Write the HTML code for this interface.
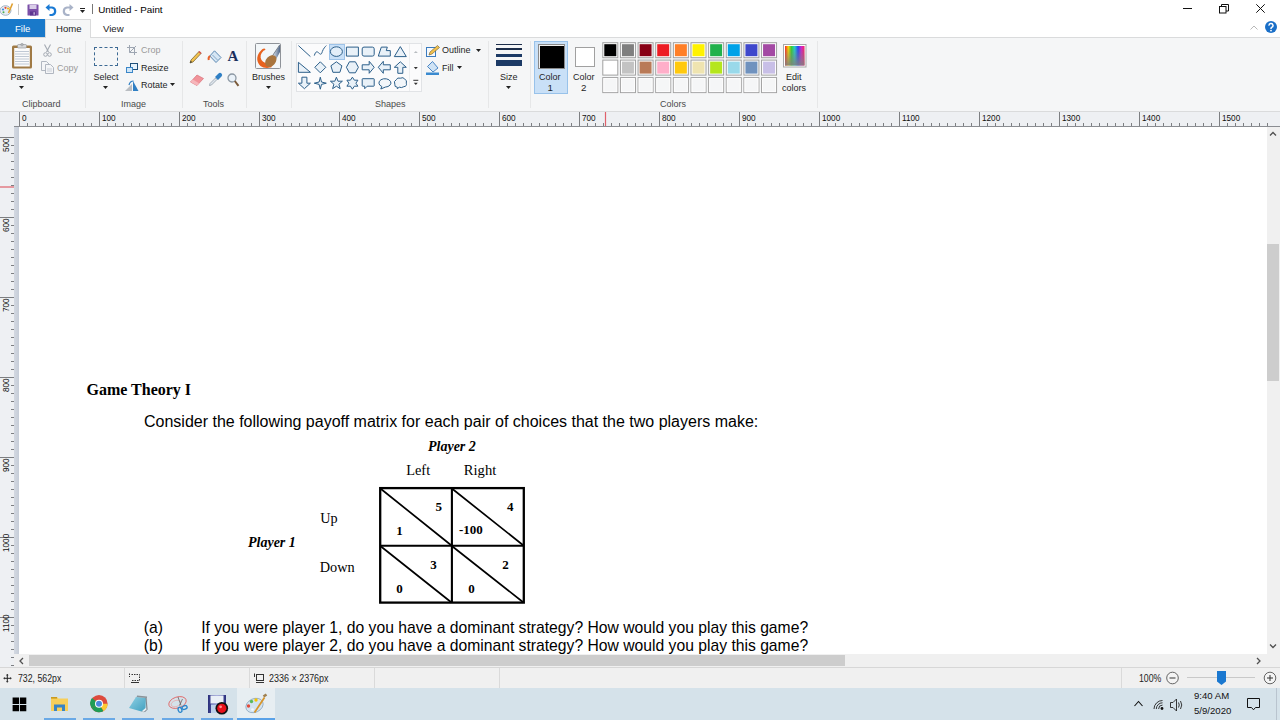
<!DOCTYPE html>
<html><head><meta charset="utf-8"><style>
*{box-sizing:border-box}
html,body{margin:0;padding:0}
body{width:1280px;height:720px;overflow:hidden;position:relative;background:#fff;font-family:"Liberation Sans",sans-serif;color:#000}
.a{position:absolute}
.t{position:absolute;white-space:nowrap;line-height:1}
.rb{font-size:9px;color:#1e1e1e}
.gl{font-size:9px;color:#4a4a4a}
.sep{position:absolute;width:1px;background:#e6e7e8}
svg{position:absolute;overflow:visible}
</style></head><body>

<!-- ===== TITLE BAR ===== -->
<div id="title" class="a" style="left:0;top:0;width:1280px;height:19px;background:#fff"></div>
<div class="t" style="left:98.3px;top:4.6px;font-size:9.8px;color:#000">Untitled - Paint</div>
<!-- paint icon -->
<svg style="left:0;top:3px" width="13" height="13" viewBox="0 0 13 13">
<ellipse cx="5.5" cy="7.5" rx="5.5" ry="4.8" fill="#e9edf2" stroke="#8ea3ba" stroke-width="0.8"/>
<circle cx="3" cy="6.5" r="1.1" fill="#3a8de0"/><circle cx="5.5" cy="4.8" r="1.1" fill="#e04a3a"/><circle cx="3.5" cy="9.3" r="1" fill="#4caf50"/><circle cx="8" cy="5.6" r="1" fill="#f5b400"/>
<path d="M12.5 0.5 L8.5 10" stroke="#e0a030" stroke-width="1.6"/>
</svg>
<div class="a" style="left:18px;top:4px;width:1px;height:11px;background:#c8c8c8"></div>
<!-- save -->
<svg style="left:27px;top:4px" width="12" height="12" viewBox="0 0 12 12">
<rect x="0.5" y="0.5" width="11" height="11" rx="0.5" fill="#7b4fa8"/>
<rect x="2.5" y="1" width="7" height="4" fill="#d9cde8"/>
<rect x="3" y="7.5" width="6" height="4" fill="#5d3590"/>
<rect x="6.5" y="8.2" width="1.3" height="2.5" fill="#cdbde0"/>
</svg>
<!-- undo -->
<svg style="left:45px;top:4px" width="12" height="12" viewBox="0 0 12 12">
<path d="M3.5 3.5 H7 A3.8 3.8 0 0 1 7 11 H4.5" fill="none" stroke="#1a7ad4" stroke-width="2.2"/>
<path d="M0.5 3.5 L4.5 0 V7 Z" fill="#1a7ad4"/>
</svg>
<!-- redo -->
<svg style="left:62px;top:4px" width="12" height="12" viewBox="0 0 12 12">
<path d="M8.5 3.5 H5 A3.8 3.8 0 0 0 5 11 H7.5" fill="none" stroke="#a9b3c8" stroke-width="2.2"/>
<path d="M11.5 3.5 L7.5 0 V7 Z" fill="#a9b3c8"/>
</svg>
<!-- customize -->
<div class="a" style="left:80px;top:8px;width:5px;height:1px;background:#222"></div>
<svg style="left:80px;top:10px" width="6" height="4" viewBox="0 0 6 4"><path d="M0 0 H5 L2.5 3 Z" fill="#222"/></svg>
<div class="a" style="left:92px;top:4px;width:1px;height:10px;background:#777"></div>
<!-- window controls -->
<div class="a" style="left:1183px;top:8px;width:9px;height:1px;background:#111"></div>
<svg style="left:1219px;top:4px" width="10" height="10" viewBox="0 0 10 10">
<rect x="0.5" y="2.5" width="6.5" height="6.5" fill="none" stroke="#111" stroke-width="1"/>
<path d="M2.5 2.5 V0.5 H9.5 V7 H7" fill="none" stroke="#111" stroke-width="1"/>
</svg>
<svg style="left:1256px;top:4px" width="9" height="9" viewBox="0 0 9 9">
<path d="M0.3 0.3 L8.7 8.7 M8.7 0.3 L0.3 8.7" stroke="#111" stroke-width="1"/>
</svg>


<!-- ===== TABS ===== -->
<div class="a" style="left:0;top:37px;width:1280px;height:1px;background:#dadbdc"></div>
<div class="a" style="left:0;top:19px;width:45px;height:18px;background:#1979ca"></div>
<div class="t" style="left:15px;top:24px;font-size:9.6px;color:#fff">File</div>
<div class="a" style="left:45px;top:19px;width:46px;height:19px;background:#f5f6f7;border:1px solid #dadbdc;border-bottom:none"></div>
<div class="t" style="left:56px;top:24px;font-size:9.6px;color:#222">Home</div>
<div class="t" style="left:103px;top:24px;font-size:9.6px;color:#222">View</div>
<svg style="left:1250px;top:25px" width="8" height="5" viewBox="0 0 8 5"><path d="M0.5 4.5 L4 1 L7.5 4.5" fill="none" stroke="#b8b8b8" stroke-width="1"/></svg>
<svg style="left:1265px;top:21px" width="12" height="12" viewBox="0 0 12 12"><circle cx="6" cy="6" r="6" fill="#1a6fc8"/>
<path d="M4 4.6 A2 2 0 1 1 6.6 6.4 C6 6.7 6 7 6 7.9" fill="none" stroke="#fff" stroke-width="1.5"/><circle cx="6" cy="9.6" r="0.9" fill="#fff"/></svg>


<!-- ===== RIBBON ===== -->
<div id="ribbon" class="a" style="left:0;top:38px;width:1280px;height:73px;background:#f5f6f7"></div>
<div class="a" style="left:0;top:111px;width:1280px;height:1px;background:#dadbdc"></div>
<!--RIBBON-->
<div class="sep" style="left:85px;top:41px;height:67px"></div>
<div class="sep" style="left:182px;top:41px;height:67px"></div>
<div class="sep" style="left:246px;top:41px;height:67px"></div>
<div class="sep" style="left:291px;top:41px;height:67px"></div>
<div class="sep" style="left:488px;top:41px;height:67px"></div>
<div class="sep" style="left:530px;top:41px;height:67px"></div>
<div class="sep" style="left:817px;top:41px;height:67px"></div>
<svg style="left:11px;top:43px" width="22" height="26" viewBox="0 0 22 26">
<rect x="1" y="2.5" width="20" height="23" rx="1.5" fill="#a07a45"/>
<rect x="3.2" y="5" width="15.6" height="18.5" fill="#fbfbfb"/>
<path d="M4 8.5H18M4 11H18M4 13.5H18M4 16H18M4 18.5H18M4 21H18" stroke="#b9c3cf" stroke-width="0.9"/>
<rect x="6.5" y="1.5" width="9" height="3.5" rx="1" fill="#d7d9dc" stroke="#8b8f94" stroke-width="0.6"/>
<circle cx="11" cy="1.6" r="1.3" fill="none" stroke="#8b8f94" stroke-width="0.6"/>
</svg>
<div class="t rb" style="left:10.5px;top:73px">Paste</div>
<svg style="left:19.0px;top:85.5px" width="5" height="3" viewBox="0 0 5 3"><path d="M0 0 H5 L2.5 3 Z" fill="#222"/></svg>

<svg style="left:43px;top:44px" width="9" height="13" viewBox="0 0 9 13">
<path d="M1.5 0.5 L5.5 8 M7.5 0.5 L3.5 8" stroke="#a3a9b2" stroke-width="1.1"/>
<circle cx="2.5" cy="10.5" r="1.8" fill="none" stroke="#a3a9b2" stroke-width="1"/><circle cx="6.5" cy="10.5" r="1.8" fill="none" stroke="#a3a9b2" stroke-width="1"/>
</svg>
<div class="t rb" style="left:57px;top:46px;color:#9a9a9a">Cut</div>
<svg style="left:41px;top:61px" width="13" height="13" viewBox="0 0 13 13">
<path d="M0.5 0.5 H5.5 L8 3 V9.5 H0.5 Z" fill="#f4f5f7" stroke="#a9b0ba" stroke-width="0.9"/>
<path d="M4.5 3.5 H9.5 L12.5 6.5 V12.5 H4.5 Z" fill="#f4f5f7" stroke="#a9b0ba" stroke-width="0.9"/>
<path d="M6 8H11M6 10H11" stroke="#b8c0ca" stroke-width="0.7"/>
</svg>
<div class="t rb" style="left:57px;top:63.5px;color:#9a9a9a">Copy</div>
<div class="t gl" style="left:22px;top:100px">Clipboard</div>
<div class="a" style="left:94px;top:47px;width:24px;height:19px;border:1px dashed #3d6a94"></div>
<div class="t rb" style="left:93.5px;top:73px">Select</div>
<svg style="left:103.0px;top:85.5px" width="5" height="3" viewBox="0 0 5 3"><path d="M0 0 H5 L2.5 3 Z" fill="#222"/></svg>

<svg style="left:127px;top:45px" width="10" height="10" viewBox="0 0 10 10">
<path d="M2.5 0 V7.5 H10 M0 2.5 H7.5 V10" fill="none" stroke="#9ea6b2" stroke-width="1"/><path d="M2.5 7.5 L9 1" stroke="#9ea6b2" stroke-width="1"/>
</svg>
<div class="t rb" style="left:141px;top:46px;color:#9a9a9a">Crop</div>
<svg style="left:126px;top:63px" width="12" height="10" viewBox="0 0 12 10">
<rect x="4.5" y="0.5" width="7" height="6" fill="#e6f2fb" stroke="#1f4f7a" stroke-width="1"/>
<rect x="0.5" y="4.5" width="6" height="5" fill="#d0e6f7" stroke="#3a86c8" stroke-width="1"/>
</svg>
<div class="t rb" style="left:141px;top:64px">Resize</div>
<svg style="left:125px;top:80px" width="14" height="11" viewBox="0 0 14 11">
<path d="M0 11 L7 4 V11 Z" fill="#b9bdc2"/><path d="M8 11 V1 L13.5 11 Z" fill="#2f7fc4"/>
<path d="M4 5 Q5 1 8.5 1" fill="none" stroke="#2f7fc4" stroke-width="1.2"/>
</svg>
<div class="t rb" style="left:141px;top:81px">Rotate</div>
<svg style="left:170.0px;top:82.5px" width="5" height="3" viewBox="0 0 5 3"><path d="M0 0 H5 L2.5 3 Z" fill="#222"/></svg>

<div class="t gl" style="left:121px;top:100px">Image</div>
<svg style="left:189px;top:50px" width="13" height="14" viewBox="0 0 13 14">
<path d="M1 13 L2 10 L10 1.5 L12 3.5 L4 12 Z" fill="#f2c14e" stroke="#6b5a2a" stroke-width="0.7"/>
<path d="M10 1.5 L12 3.5" stroke="#d9534f" stroke-width="1.6"/>
<path d="M1 13 L1.8 10.8 L3 12 Z" fill="#333"/>
</svg>
<svg style="left:208px;top:50px" width="14" height="14" viewBox="0 0 14 14">
<path d="M6.5 0.8 L13 7.5 L8 12.5 L1.8 6 Z" fill="#d6e6f4" stroke="#4d7eaa" stroke-width="0.9"/>
<path d="M2 6 Q0 7.5 0.8 10" fill="none" stroke="#e8622c" stroke-width="2"/>
<path d="M4.5 5 L9.5 10" stroke="#4d7eaa" stroke-width="0.6"/>
</svg>
<div class="t" style="left:227.5px;top:49px;font-family:Liberation Serif,serif;font-weight:bold;font-size:15px;color:#1b2f5e">A</div>
<svg style="left:190px;top:74px" width="14" height="12" viewBox="0 0 14 12">
<path d="M0.5 8 L7 1 L13.5 4.5 L7 11.5 Z" fill="#f1939a" stroke="#d8737b" stroke-width="0.7"/>
<path d="M0.5 8 L7 11.5 L9 9.3 L2.8 5.6 Z" fill="#f6b6bb"/>
</svg>
<svg style="left:209px;top:73px" width="13" height="13" viewBox="0 0 13 13">
<path d="M0.5 12.5 L1 10.5 L6.5 5 L8 6.5 L2.5 12 Z" fill="#dfe5ec" stroke="#8a96a3" stroke-width="0.7"/>
<path d="M6 4 L9 7 L10.5 5.5 L12.5 3.5 A1.8 1.8 0 0 0 9.5 0.5 L7.5 2.5 Z" fill="#2f7fc4"/>
</svg>
<svg style="left:227px;top:73px" width="12" height="14" viewBox="0 0 12 14">
<circle cx="5" cy="5" r="4" fill="#eaf2f9" stroke="#8c98a4" stroke-width="1.3"/>
<path d="M7.8 8 L11.5 12.8" stroke="#7a5a3a" stroke-width="2"/>
</svg>
<div class="t gl" style="left:203px;top:100px">Tools</div>
<svg style="left:255px;top:43px" width="26" height="26" viewBox="0 0 26 26">
<defs><linearGradient id="hdl" x1="0" y1="0" x2="1" y2="0"><stop offset="0" stop-color="#e8eef4"/><stop offset="1" stop-color="#4f6688"/></linearGradient></defs>
<rect x="0.5" y="0.5" width="25" height="25" rx="1" fill="#f3f7f9" stroke="#8f9399" stroke-width="1"/>
<path d="M10.5 6.2 C9.5 4.8 7.5 5.5 6 7.5 C3 10.5 1.8 14 2.3 17 C3 22 7 25 12 25 L16.5 24.2 L17.2 19.5 C13.5 21.5 9 20.5 6.5 17 C4.8 14.2 5.5 10.5 8.5 7.8 C9.3 7.2 10.2 7 10.5 6.2 Z" fill="#e8621e"/>
<path d="M17.5 13.5 L25 2 V9 L21 16.5 Z" fill="url(#hdl)"/>
<path d="M16.8 13.8 L24.8 1.8" stroke="#3d4a5c" stroke-width="0.7"/>
<ellipse cx="15.8" cy="18" rx="4.8" ry="6.6" transform="rotate(42 15.8 18)" fill="#a9753e"/>
</svg>
<div class="t rb" style="left:252px;top:73px">Brushes</div>
<svg style="left:265.5px;top:85.5px" width="5" height="3" viewBox="0 0 5 3"><path d="M0 0 H5 L2.5 3 Z" fill="#222"/></svg>

<div class="a" style="left:296px;top:43px;width:126px;height:49px;background:#fbfbfc;border:1px solid #e1e3e6"></div>
<div class="a" style="left:409px;top:44px;width:1px;height:47px;background:#eceef0"></div>
<div class="a" style="left:329px;top:43.5px;width:16px;height:16px;background:#c9e0f7;border:1px solid #9ec3e8"></div>
<svg style="left:0;top:0" width="1" height="1"><path transform="translate(304.4 51.6)" d="M-6 -6 L6 5" fill="none" stroke="#2c5f8a" stroke-width="1"/><path transform="translate(320.3 51.6)" d="M-6 4 C-3 -6 0 8 2 0 C3 -3 5 -5 6 -6" fill="none" stroke="#2c5f8a" stroke-width="1"/><ellipse cx="336.4" cy="51.6" rx="6" ry="4.8" fill="#e3eef8" stroke="#2c5f8a" stroke-width="1"/><path transform="translate(352.4 51.6)" d="M-6 -4.5 H6 V4.5 H-6 Z" fill="#e9f1f8" stroke="#2c5f8a" stroke-width="1"/><rect x="362.2" y="47.1" width="12" height="9" rx="1.8" fill="#e9f1f8" stroke="#2c5f8a" stroke-width="1"/><path transform="translate(384.3 51.6)" d="M-6 4.5 L-3 -4.5 H3 L2 -1 H6 V4.5 Z" fill="#e9f1f8" stroke="#2c5f8a" stroke-width="1"/><path transform="translate(400.3 51.6)" d="M0 -5 L6 5 H-6 Z" fill="#e9f1f8" stroke="#2c5f8a" stroke-width="1"/><path transform="translate(304.4 67.3)" d="M-6 -5 V5 H6 Z" fill="#e9f1f8" stroke="#2c5f8a" stroke-width="1"/><path transform="translate(320.3 67.3)" d="M0 -5.5 L5.5 0 L0 5.5 L-5.5 0 Z" fill="#e9f1f8" stroke="#2c5f8a" stroke-width="1"/><path transform="translate(336.4 67.3)" d="M0 -5.5 L5.5 -1.5 L3.5 5 H-3.5 L-5.5 -1.5 Z" fill="#e9f1f8" stroke="#2c5f8a" stroke-width="1"/><path transform="translate(352.4 67.3)" d="M-3 -5.5 H3 L6 0 L3 5.5 H-3 L-6 0 Z" fill="#e9f1f8" stroke="#2c5f8a" stroke-width="1"/><path transform="translate(368.2 67.3)" d="M-6 -2.5 H1 V-6 L6 0 L1 6 V2.5 H-6 Z" fill="#e9f1f8" stroke="#2c5f8a" stroke-width="1"/><path transform="translate(384.3 67.3)" d="M6 -2.5 H-1 V-6 L-6 0 L-1 6 V2.5 H6 Z" fill="#e9f1f8" stroke="#2c5f8a" stroke-width="1"/><path transform="translate(400.3 67.3)" d="M-2.5 6 V0 H-6 L0 -5.5 L6 0 H2.5 V6 Z" fill="#e9f1f8" stroke="#2c5f8a" stroke-width="1"/><path transform="translate(304.4 83.2)" d="M-2.5 -6 V0 H-6 L0 5.5 L6 0 H2.5 V-6 Z" fill="#e9f1f8" stroke="#2c5f8a" stroke-width="1"/><path transform="translate(320.3 83.2)" d="M0 -6 L1.2 -1.2 L6 0 L1.2 1.2 L0 6 L-1.2 1.2 L-6 0 L-1.2 -1.2 Z" fill="#e9f1f8" stroke="#2c5f8a" stroke-width="1"/><path transform="translate(336.4 83.2)" d="M0 -6 L1.6 -2 L6 -2 L2.5 1 L3.8 5.5 L0 3 L-3.8 5.5 L-2.5 1 L-6 -2 L-1.6 -2 Z" fill="#e9f1f8" stroke="#2c5f8a" stroke-width="1"/><path transform="translate(352.4 83.2)" d="M0 -6 L2 -3 H5.5 L3.5 0 L5.5 3 H2 L0 6 L-2 3 H-5.5 L-3.5 0 L-5.5 -3 H-2 Z" fill="#e9f1f8" stroke="#2c5f8a" stroke-width="1"/><path transform="translate(368.2 83.2)" d="M-5.5 -4.5 H5.5 Q6 -4.5 6 -4 V2.5 Q6 3 5.5 3 H-1 L-3.5 5.5 V3 H-5.5 Q-6 3 -6 2.5 V-4 Q-6 -4.5 -5.5 -4.5 Z" fill="#e9f1f8" stroke="#2c5f8a" stroke-width="1"/><path transform="translate(384.3 83.2)" d="M-2.5 3.3 A6 4.2 0 1 1 1 3.9 L-3.5 5.8 Z" fill="#f2f6fa" stroke="#2c5f8a" stroke-width="1"/><path transform="translate(400.3 83.2)" d="M-3 4 Q-6 4 -5.5 1 Q-7 -2 -4 -3.5 Q-3 -6 0 -5 Q3 -6.5 4.5 -4 Q7 -3 6 0 Q7 3 3.5 3.5 Q1 5 -1 4 L-3 5.5 Z" fill="#f2f6fa" stroke="#2c5f8a" stroke-width="1"/><path d="M413.8 53 H417.8 L415.8 51 Z" fill="#b8bcc0"/><path d="M413.8 67 H417.8 L415.8 69.2 Z" fill="#333"/><path d="M413.3 80.3 H418.3" stroke="#333" stroke-width="1"/><path d="M413.8 82.8 H417.8 L415.8 85 Z" fill="#333"/></svg>
<div class="t gl" style="left:375px;top:100px">Shapes</div>
<svg style="left:426px;top:45px" width="14" height="12" viewBox="0 0 14 12">
<rect x="0.5" y="2.5" width="9" height="9" fill="#f7f9fb" stroke="#3a7bbf" stroke-width="1"/>
<path d="M3 10 L4 7 L11.5 0.5 L13.5 2.5 L6 9 Z" fill="#f2c14e" stroke="#6b5a2a" stroke-width="0.6"/>
</svg>
<div class="t rb" style="left:442px;top:46px">Outline</div>
<svg style="left:476.0px;top:48.5px" width="5" height="3" viewBox="0 0 5 3"><path d="M0 0 H5 L2.5 3 Z" fill="#222"/></svg>

<svg style="left:426px;top:61px" width="14" height="14" viewBox="0 0 14 14">
<path d="M6.5 0.5 L12 7 L7 11 L1.5 5.5 Z" fill="#cfe3f5" stroke="#3a7bbf" stroke-width="0.9"/>
<rect x="0" y="11.5" width="13" height="2.5" fill="#3a8ad0"/>
</svg>
<div class="t rb" style="left:442px;top:64px">Fill</div>
<svg style="left:457.0px;top:65.5px" width="5" height="3" viewBox="0 0 5 3"><path d="M0 0 H5 L2.5 3 Z" fill="#222"/></svg>

<div class="a" style="left:496px;top:44px;width:26px;height:1px;background:#1c2d4a"></div>
<div class="a" style="left:496px;top:48px;width:26px;height:2px;background:#1c2d4a"></div>
<div class="a" style="left:496px;top:54px;width:26px;height:3px;background:#1c3a66"></div>
<div class="a" style="left:496px;top:60px;width:26px;height:6px;background:#1c3a66"></div>
<div class="t rb" style="left:500px;top:73px">Size</div>
<svg style="left:506.0px;top:85.5px" width="5" height="3" viewBox="0 0 5 3"><path d="M0 0 H5 L2.5 3 Z" fill="#222"/></svg>

<div class="a" style="left:534px;top:41px;width:34px;height:53px;background:#c9e0f7;border:1px solid #98c2ea"></div>
<div class="a" style="left:538px;top:44px;width:27px;height:25px;background:#000;border:1px solid #8a8a8a;box-shadow:inset 0 0 0 1px #f0f0f0"></div>
<div class="a" style="left:539.5px;top:45.5px;width:24px;height:22px;background:#000"></div>
<div class="t rb" style="left:539px;top:73px">Color</div>
<div class="t rb" style="left:547.5px;top:83.3px;font-size:9.8px">1</div>
<div class="a" style="left:575px;top:47px;width:20px;height:20px;background:#fff;border:1px solid #a0a0a0"></div>
<div class="t rb" style="left:573px;top:73px">Color</div>
<div class="t rb" style="left:581px;top:83.3px;font-size:9.8px">2</div>
<svg style="left:0;top:0" width="1" height="1"><rect x="602.80" y="42.70" width="15" height="15" fill="#fff" stroke="#a0a0a0" stroke-width="1"/><rect x="604.30" y="44.20" width="12" height="12" fill="#000000"/><rect x="620.44" y="42.70" width="15" height="15" fill="#fff" stroke="#a0a0a0" stroke-width="1"/><rect x="621.94" y="44.20" width="12" height="12" fill="#7f7f7f"/><rect x="638.08" y="42.70" width="15" height="15" fill="#fff" stroke="#a0a0a0" stroke-width="1"/><rect x="639.58" y="44.20" width="12" height="12" fill="#880015"/><rect x="655.72" y="42.70" width="15" height="15" fill="#fff" stroke="#a0a0a0" stroke-width="1"/><rect x="657.22" y="44.20" width="12" height="12" fill="#ed1c24"/><rect x="673.36" y="42.70" width="15" height="15" fill="#fff" stroke="#a0a0a0" stroke-width="1"/><rect x="674.86" y="44.20" width="12" height="12" fill="#ff7f27"/><rect x="691.00" y="42.70" width="15" height="15" fill="#fff" stroke="#a0a0a0" stroke-width="1"/><rect x="692.50" y="44.20" width="12" height="12" fill="#fff200"/><rect x="708.64" y="42.70" width="15" height="15" fill="#fff" stroke="#a0a0a0" stroke-width="1"/><rect x="710.14" y="44.20" width="12" height="12" fill="#22b14c"/><rect x="726.28" y="42.70" width="15" height="15" fill="#fff" stroke="#a0a0a0" stroke-width="1"/><rect x="727.78" y="44.20" width="12" height="12" fill="#00a2e8"/><rect x="743.92" y="42.70" width="15" height="15" fill="#fff" stroke="#a0a0a0" stroke-width="1"/><rect x="745.42" y="44.20" width="12" height="12" fill="#3f48cc"/><rect x="761.56" y="42.70" width="15" height="15" fill="#fff" stroke="#a0a0a0" stroke-width="1"/><rect x="763.06" y="44.20" width="12" height="12" fill="#a349a4"/><rect x="602.80" y="60.10" width="15" height="15" fill="#fff" stroke="#a0a0a0" stroke-width="1"/><rect x="604.30" y="61.60" width="12" height="12" fill="#ffffff"/><rect x="620.44" y="60.10" width="15" height="15" fill="#fff" stroke="#a0a0a0" stroke-width="1"/><rect x="621.94" y="61.60" width="12" height="12" fill="#c3c3c3"/><rect x="638.08" y="60.10" width="15" height="15" fill="#fff" stroke="#a0a0a0" stroke-width="1"/><rect x="639.58" y="61.60" width="12" height="12" fill="#b97a57"/><rect x="655.72" y="60.10" width="15" height="15" fill="#fff" stroke="#a0a0a0" stroke-width="1"/><rect x="657.22" y="61.60" width="12" height="12" fill="#ffaec9"/><rect x="673.36" y="60.10" width="15" height="15" fill="#fff" stroke="#a0a0a0" stroke-width="1"/><rect x="674.86" y="61.60" width="12" height="12" fill="#ffc90e"/><rect x="691.00" y="60.10" width="15" height="15" fill="#fff" stroke="#a0a0a0" stroke-width="1"/><rect x="692.50" y="61.60" width="12" height="12" fill="#efe4b0"/><rect x="708.64" y="60.10" width="15" height="15" fill="#fff" stroke="#a0a0a0" stroke-width="1"/><rect x="710.14" y="61.60" width="12" height="12" fill="#b5e61d"/><rect x="726.28" y="60.10" width="15" height="15" fill="#fff" stroke="#a0a0a0" stroke-width="1"/><rect x="727.78" y="61.60" width="12" height="12" fill="#99d9ea"/><rect x="743.92" y="60.10" width="15" height="15" fill="#fff" stroke="#a0a0a0" stroke-width="1"/><rect x="745.42" y="61.60" width="12" height="12" fill="#7092be"/><rect x="761.56" y="60.10" width="15" height="15" fill="#fff" stroke="#a0a0a0" stroke-width="1"/><rect x="763.06" y="61.60" width="12" height="12" fill="#c8bfe7"/><rect x="602.80" y="77.60" width="15" height="15" fill="#f5f6f7" stroke="#a0a0a0" stroke-width="1"/><rect x="603.80" y="78.60" width="13" height="13" fill="none" stroke="#fdfdfd" stroke-width="1"/><rect x="620.44" y="77.60" width="15" height="15" fill="#f5f6f7" stroke="#a0a0a0" stroke-width="1"/><rect x="621.44" y="78.60" width="13" height="13" fill="none" stroke="#fdfdfd" stroke-width="1"/><rect x="638.08" y="77.60" width="15" height="15" fill="#f5f6f7" stroke="#a0a0a0" stroke-width="1"/><rect x="639.08" y="78.60" width="13" height="13" fill="none" stroke="#fdfdfd" stroke-width="1"/><rect x="655.72" y="77.60" width="15" height="15" fill="#f5f6f7" stroke="#a0a0a0" stroke-width="1"/><rect x="656.72" y="78.60" width="13" height="13" fill="none" stroke="#fdfdfd" stroke-width="1"/><rect x="673.36" y="77.60" width="15" height="15" fill="#f5f6f7" stroke="#a0a0a0" stroke-width="1"/><rect x="674.36" y="78.60" width="13" height="13" fill="none" stroke="#fdfdfd" stroke-width="1"/><rect x="691.00" y="77.60" width="15" height="15" fill="#f5f6f7" stroke="#a0a0a0" stroke-width="1"/><rect x="692.00" y="78.60" width="13" height="13" fill="none" stroke="#fdfdfd" stroke-width="1"/><rect x="708.64" y="77.60" width="15" height="15" fill="#f5f6f7" stroke="#a0a0a0" stroke-width="1"/><rect x="709.64" y="78.60" width="13" height="13" fill="none" stroke="#fdfdfd" stroke-width="1"/><rect x="726.28" y="77.60" width="15" height="15" fill="#f5f6f7" stroke="#a0a0a0" stroke-width="1"/><rect x="727.28" y="78.60" width="13" height="13" fill="none" stroke="#fdfdfd" stroke-width="1"/><rect x="743.92" y="77.60" width="15" height="15" fill="#f5f6f7" stroke="#a0a0a0" stroke-width="1"/><rect x="744.92" y="78.60" width="13" height="13" fill="none" stroke="#fdfdfd" stroke-width="1"/><rect x="761.56" y="77.60" width="15" height="15" fill="#f5f6f7" stroke="#a0a0a0" stroke-width="1"/><rect x="762.56" y="78.60" width="13" height="13" fill="none" stroke="#fdfdfd" stroke-width="1"/></svg>
<svg style="left:783px;top:44px" width="24" height="24" viewBox="0 0 24 24">
<defs><linearGradient id="hue" x1="0" x2="1" y1="0" y2="0">
<stop offset="0" stop-color="#ff2020"/><stop offset="0.17" stop-color="#ffd800"/><stop offset="0.33" stop-color="#30d030"/><stop offset="0.5" stop-color="#20d0d0"/><stop offset="0.67" stop-color="#2040ff"/><stop offset="0.83" stop-color="#d020d0"/><stop offset="1" stop-color="#ff2060"/></linearGradient>
<linearGradient id="sat" x1="0" x2="0" y1="0" y2="1"><stop offset="0" stop-color="#808080" stop-opacity="0"/><stop offset="1" stop-color="#808080" stop-opacity="0.9"/></linearGradient></defs>
<rect x="0.5" y="0.5" width="22.5" height="22.5" fill="#fff" stroke="#a8a8a8" stroke-width="1"/>
<rect x="2" y="2" width="19.5" height="19.5" fill="url(#hue)"/><rect x="2" y="2" width="19.5" height="19.5" fill="url(#sat)"/>
</svg>
<div class="t rb" style="left:786px;top:73px">Edit</div>
<div class="t rb" style="left:782px;top:84px">colors</div>
<div class="t gl" style="left:660px;top:100px">Colors</div>
<!--/RIBBON-->

<!-- ===== RULER ===== -->
<div class="a" style="left:0;top:112px;width:1280px;height:14px;background:#eef0f3"></div>
<div class="a" style="left:14px;top:126px;width:1266px;height:1px;background:#8a8d92"></div>
<div class="a" style="left:0;top:126px;width:14px;height:541px;background:#eef0f3"></div>

<!--RULER-->
<svg style="left:0;top:0" width="1" height="1"><path d="M19.5 112V126M27.5 123V126M35.5 123V126M43.5 123V126M51.5 123V126M59.5 123V126M67.5 123V126M75.5 123V126M83.5 123V126M91.5 123V126M99.5 112V126M107.5 123V126M115.5 123V126M123.5 123V126M131.5 123V126M139.5 123V126M147.5 123V126M155.5 123V126M163.5 123V126M171.5 123V126M179.5 112V126M187.5 123V126M195.5 123V126M203.5 123V126M211.5 123V126M219.5 123V126M227.5 123V126M235.5 123V126M243.5 123V126M251.5 123V126M259.5 112V126M267.5 123V126M275.5 123V126M283.5 123V126M291.5 123V126M299.5 123V126M307.5 123V126M315.5 123V126M323.5 123V126M331.5 123V126M339.5 112V126M347.5 123V126M355.5 123V126M363.5 123V126M371.5 123V126M379.5 123V126M387.5 123V126M395.5 123V126M403.5 123V126M411.5 123V126M419.5 112V126M427.5 123V126M435.5 123V126M443.5 123V126M451.5 123V126M459.5 123V126M467.5 123V126M475.5 123V126M483.5 123V126M491.5 123V126M499.5 112V126M507.5 123V126M515.5 123V126M523.5 123V126M531.5 123V126M539.5 123V126M547.5 123V126M555.5 123V126M563.5 123V126M571.5 123V126M579.5 112V126M587.5 123V126M595.5 123V126M603.5 123V126M611.5 123V126M619.5 123V126M627.5 123V126M635.5 123V126M643.5 123V126M651.5 123V126M659.5 112V126M667.5 123V126M675.5 123V126M683.5 123V126M691.5 123V126M699.5 123V126M707.5 123V126M715.5 123V126M723.5 123V126M731.5 123V126M739.5 112V126M747.5 123V126M755.5 123V126M763.5 123V126M771.5 123V126M779.5 123V126M787.5 123V126M795.5 123V126M803.5 123V126M811.5 123V126M819.5 112V126M827.5 123V126M835.5 123V126M843.5 123V126M851.5 123V126M859.5 123V126M867.5 123V126M875.5 123V126M883.5 123V126M891.5 123V126M899.5 112V126M907.5 123V126M915.5 123V126M923.5 123V126M931.5 123V126M939.5 123V126M947.5 123V126M955.5 123V126M963.5 123V126M971.5 123V126M979.5 112V126M987.5 123V126M995.5 123V126M1003.5 123V126M1011.5 123V126M1019.5 123V126M1027.5 123V126M1035.5 123V126M1043.5 123V126M1051.5 123V126M1059.5 112V126M1067.5 123V126M1075.5 123V126M1083.5 123V126M1091.5 123V126M1099.5 123V126M1107.5 123V126M1115.5 123V126M1123.5 123V126M1131.5 123V126M1139.5 112V126M1147.5 123V126M1155.5 123V126M1163.5 123V126M1171.5 123V126M1179.5 123V126M1187.5 123V126M1195.5 123V126M1203.5 123V126M1211.5 123V126M1219.5 112V126M1227.5 123V126M1235.5 123V126M1243.5 123V126M1251.5 123V126M1259.5 123V126M1267.5 123V126" stroke="#7d7f82" stroke-width="1"/><path d="M0 137.5H14M11 145.5H14M11 153.5H14M11 161.5H14M11 169.5H14M11 177.5H14M11 185.5H14M11 193.5H14M11 201.5H14M11 209.5H14M0 217.5H14M11 225.5H14M11 233.5H14M11 241.5H14M11 249.5H14M11 257.5H14M11 265.5H14M11 273.5H14M11 281.5H14M11 289.5H14M0 297.5H14M11 305.5H14M11 313.5H14M11 321.5H14M11 329.5H14M11 337.5H14M11 345.5H14M11 353.5H14M11 361.5H14M11 369.5H14M0 377.5H14M11 385.5H14M11 393.5H14M11 401.5H14M11 409.5H14M11 417.5H14M11 425.5H14M11 433.5H14M11 441.5H14M11 449.5H14M0 457.5H14M11 465.5H14M11 473.5H14M11 481.5H14M11 489.5H14M11 497.5H14M11 505.5H14M11 513.5H14M11 521.5H14M11 529.5H14M0 537.5H14M11 545.5H14M11 553.5H14M11 561.5H14M11 569.5H14M11 577.5H14M11 585.5H14M11 593.5H14M11 601.5H14M11 609.5H14M0 617.5H14M11 625.5H14M11 633.5H14M11 641.5H14M11 649.5H14M11 657.5H14M11 665.5H14" stroke="#7d7f82" stroke-width="1"/><path d="M605.5 112V126" stroke="#e0606a" stroke-width="1.2"/><path d="M0 187H14" stroke="#e0606a" stroke-width="1.2"/></svg>
<div class="t" style="left:22px;top:114.5px;font-size:8.2px;color:#111">0</div>
<div class="t" style="left:102px;top:114.5px;font-size:8.2px;color:#111">100</div>
<div class="t" style="left:182px;top:114.5px;font-size:8.2px;color:#111">200</div>
<div class="t" style="left:262px;top:114.5px;font-size:8.2px;color:#111">300</div>
<div class="t" style="left:342px;top:114.5px;font-size:8.2px;color:#111">400</div>
<div class="t" style="left:422px;top:114.5px;font-size:8.2px;color:#111">500</div>
<div class="t" style="left:502px;top:114.5px;font-size:8.2px;color:#111">600</div>
<div class="t" style="left:582px;top:114.5px;font-size:8.2px;color:#111">700</div>
<div class="t" style="left:662px;top:114.5px;font-size:8.2px;color:#111">800</div>
<div class="t" style="left:742px;top:114.5px;font-size:8.2px;color:#111">900</div>
<div class="t" style="left:822px;top:114.5px;font-size:8.2px;color:#111">1000</div>
<div class="t" style="left:902px;top:114.5px;font-size:8.2px;color:#111">1100</div>
<div class="t" style="left:982px;top:114.5px;font-size:8.2px;color:#111">1200</div>
<div class="t" style="left:1062px;top:114.5px;font-size:8.2px;color:#111">1300</div>
<div class="t" style="left:1142px;top:114.5px;font-size:8.2px;color:#111">1400</div>
<div class="t" style="left:1222px;top:114.5px;font-size:8.2px;color:#111">1500</div>
<div class="t" style="left:2.5px;top:138px;font-size:8.2px;color:#111;transform-origin:0 0;transform:translate(0px,14px) rotate(-90deg)">500</div>
<div class="t" style="left:2.5px;top:218px;font-size:8.2px;color:#111;transform-origin:0 0;transform:translate(0px,14px) rotate(-90deg)">600</div>
<div class="t" style="left:2.5px;top:298px;font-size:8.2px;color:#111;transform-origin:0 0;transform:translate(0px,14px) rotate(-90deg)">700</div>
<div class="t" style="left:2.5px;top:378px;font-size:8.2px;color:#111;transform-origin:0 0;transform:translate(0px,14px) rotate(-90deg)">800</div>
<div class="t" style="left:2.5px;top:458px;font-size:8.2px;color:#111;transform-origin:0 0;transform:translate(0px,14px) rotate(-90deg)">900</div>
<div class="t" style="left:2.5px;top:538px;font-size:8.2px;color:#111;transform-origin:0 0;transform:translate(0px,14px) rotate(-90deg)">1000</div>
<div class="t" style="left:2.5px;top:618px;font-size:8.2px;color:#111;transform-origin:0 0;transform:translate(0px,14px) rotate(-90deg)">1100</div>
<!--/RULER-->

<!-- ===== CANVAS ===== -->
<div class="a" style="left:14px;top:127px;width:5px;height:528px;background:linear-gradient(90deg,#d3d8e1,#c6cdd8)"></div>
<div id="canvas" class="a" style="left:19px;top:127px;width:1248px;height:528px;background:#fff;overflow:hidden"></div>

<!--CANVAS-->
<div class="t" style="left:86.5px;top:382.20px;font-family:Liberation Serif,serif;font-weight:bold;font-size:16px">Game Theory I</div>
<div class="t" style="left:144px;top:413.80px;font-size:16px">Consider the following payoff matrix for each pair of choices that the two players make:</div>
<div class="t" style="left:428px;top:439.50px;font-family:Liberation Serif,serif;font-weight:bold;font-style:italic;font-size:14px">Player 2</div>
<div class="t" style="left:406.2px;top:462.60px;font-family:Liberation Serif,serif;font-size:14.4px">Left</div>
<div class="t" style="left:463.8px;top:462.60px;font-family:Liberation Serif,serif;font-size:14.6px">Right</div>
<div class="t" style="left:320.3px;top:511.30px;font-family:Liberation Serif,serif;font-size:14.2px">Up</div>
<div class="t" style="left:319.8px;top:560.00px;font-family:Liberation Serif,serif;font-size:14.3px">Down</div>
<div class="t" style="left:248px;top:536.00px;font-family:Liberation Serif,serif;font-weight:bold;font-style:italic;font-size:14px">Player 1</div>
<div class="t" style="left:435.5px;top:500.01px;font-family:Liberation Serif,serif;font-weight:bold;font-size:13px">5</div>
<div class="t" style="left:507px;top:499.91px;font-family:Liberation Serif,serif;font-weight:bold;font-size:13px">4</div>
<div class="t" style="left:396.3px;top:523.81px;font-family:Liberation Serif,serif;font-weight:bold;font-size:13px">1</div>
<div class="t" style="left:459px;top:522.71px;font-family:Liberation Serif,serif;font-weight:bold;font-size:13px">-100</div>
<div class="t" style="left:430.2px;top:557.91px;font-family:Liberation Serif,serif;font-weight:bold;font-size:13px">3</div>
<div class="t" style="left:502.2px;top:557.71px;font-family:Liberation Serif,serif;font-weight:bold;font-size:13px">2</div>
<div class="t" style="left:396.2px;top:581.91px;font-family:Liberation Serif,serif;font-weight:bold;font-size:13px">0</div>
<div class="t" style="left:468.2px;top:581.81px;font-family:Liberation Serif,serif;font-weight:bold;font-size:13px">0</div>
<svg style="left:0;top:0" width="1" height="1">
<rect x="380.2" y="488.1" width="143.6" height="114.5" fill="none" stroke="#000" stroke-width="2.3"/>
<path d="M451.9 488V603 M380 545.8H524" stroke="#000" stroke-width="2.1"/>
<path d="M381 489L451.5 545.5M452.5 489L523.5 545.5M381 546.5L451.5 602.5M452.5 546.5L523.5 602.5" stroke="#000" stroke-width="1.7"/>
</svg>
<div class="t" style="left:143.8px;top:620.40px;font-size:15.7px">(a)</div>
<div class="t" style="left:201.2px;top:620.40px;font-size:15.7px">If you were player 1, do you have a dominant strategy? How would you play this game?</div>
<div class="t" style="left:143.8px;top:637.70px;font-size:15.7px">(b)</div>
<div class="t" style="left:201.2px;top:637.70px;font-size:15.7px">If you were player 2, do you have a dominant strategy? How would you play this game?</div>
<!--/CANVAS-->
<!-- ===== SCROLLBARS ===== -->
<div class="a" style="left:1267px;top:127px;width:13px;height:528px;background:#f0f0f0"></div>
<div class="a" style="left:1267px;top:244px;width:12px;height:137px;background:#cdcdcd"></div>
<div class="a" style="left:14px;top:654px;width:1253px;height:13px;background:#f0f0f0"></div>
<div class="a" style="left:29px;top:654.5px;width:816px;height:11.5px;background:#cdcdcd"></div>

<!-- ===== STATUS BAR ===== -->
<div class="a" style="left:0;top:667px;width:1280px;height:21px;background:#f0f0f0;border-top:1px solid #d7d7d7"></div>

<!-- ===== TASKBAR ===== -->
<div class="a" style="left:0;top:688px;width:1280px;height:32px;background:#d5e2ea"></div>

<!--BOTTOM-->
<svg style="left:0;top:0" width="1" height="1">
<path d="M1270 135.5 L1273 132.5 L1276 135.5" fill="none" stroke="#505050" stroke-width="1.3"/>
<path d="M1270 644.5 L1273 647.5 L1276 644.5" fill="none" stroke="#505050" stroke-width="1.3"/>
<path d="M23 658 L20 661 L23 664" fill="none" stroke="#505050" stroke-width="1.3"/>
<path d="M1257 658 L1260 661 L1257 664" fill="none" stroke="#505050" stroke-width="1.3"/>
</svg>
<div class="a" style="left:1267px;top:654px;width:13px;height:13px;background:#f0f0f0"></div>
<div class="a" style="left:124px;top:668px;width:1px;height:20px;background:#dadada"></div>
<div class="a" style="left:249px;top:668px;width:1px;height:20px;background:#dadada"></div>
<div class="a" style="left:374px;top:668px;width:1px;height:20px;background:#dadada"></div>
<div class="a" style="left:499px;top:668px;width:1px;height:20px;background:#dadada"></div>
<div class="a" style="left:1121px;top:668px;width:1px;height:20px;background:#dadada"></div>
<svg style="left:0;top:0" width="1" height="1">
<path d="M7.3 674V682.5M3.5 678.3H11.5" stroke="#222" stroke-width="1"/>
<path d="M6.3 675.2H8.3M6.3 681.5H8.3M4.5 677.3V679.3M10.5 677.3V679.3" stroke="#333" stroke-width="0.8"/>
<path d="M129.5 673.5V677M131.5 674.5H139.5V680.5H131.5" fill="none" stroke="#333" stroke-width="1" stroke-dasharray="1.5 1"/>
<path d="M131 682.5H139" stroke="#333" stroke-width="1"/>
<path d="M254.5 673.5V677" stroke="#333" stroke-width="1"/><rect x="256.5" y="674.5" width="7" height="6" fill="none" stroke="#333" stroke-width="1"/>
<path d="M256 682.5H264" stroke="#333" stroke-width="1"/>
</svg>
<div class="t" style="left:18px;top:673.8px;font-size:10.2px;color:#1e1e1e;transform-origin:0 0;transform:scaleX(0.86)">732, 562px</div>
<div class="t" style="left:268.5px;top:673.8px;font-size:10.2px;color:#1e1e1e;transform-origin:0 0;transform:scaleX(0.88)">2336 × 2376px</div>
<div class="t" style="left:1139px;top:673.8px;font-size:10.2px;color:#1e1e1e;transform-origin:0 0;transform:scaleX(0.86)">100%</div>
<svg style="left:0;top:0" width="1" height="1">
<circle cx="1172.5" cy="678" r="5.8" fill="#f4f4f4" stroke="#555" stroke-width="0.9"/><path d="M1169.5 678H1175.5" stroke="#333" stroke-width="1"/>
<path d="M1187 677.5H1255" stroke="#c9c9c9" stroke-width="1.2"/>
<path d="M1217 671H1226V681.5L1221.5 685L1217 681.5Z" fill="#1a78d0"/>
<circle cx="1270" cy="678" r="5.8" fill="#f4f4f4" stroke="#555" stroke-width="0.9"/><path d="M1267 678H1273M1270 675V681" stroke="#333" stroke-width="1"/>
</svg>
<div class="a" style="left:237px;top:688px;width:38px;height:32px;background:#e7eef2"></div>
<div class="a" style="left:44px;top:718px;width:32px;height:2px;background:#6aa9e6"></div>
<div class="a" style="left:83px;top:718px;width:32px;height:2px;background:#6aa9e6"></div>
<div class="a" style="left:122px;top:718px;width:32px;height:2px;background:#6aa9e6"></div>
<div class="a" style="left:162px;top:718px;width:32px;height:2px;background:#6aa9e6"></div>
<div class="a" style="left:201px;top:718px;width:32px;height:2px;background:#6aa9e6"></div>
<div class="a" style="left:237px;top:718px;width:38px;height:2px;background:#5aa2e8"></div>
<svg style="left:0;top:0" width="1" height="1">
<path d="M12.6 697.6H19V704H12.6Z M19.9 697.6H26.3V704H19.9Z M12.6 704.9H19V711.3H12.6Z M19.9 704.9H26.3V711.3H19.9Z" fill="#000"/>
<path d="M51 697H57L58.5 698.5H68V711H51Z" fill="#f8cf5a"/><rect x="51" y="697" width="6" height="1.6" fill="#c99a20"/>
<path d="M54 711V704.5H65V711H62V707.5H57V711Z" fill="#3a84c4"/>
<circle cx="99" cy="703.7" r="8.6" fill="#dd4b3e"/>
<path d="M99 703.7 L91.6 708 A8.6 8.6 0 0 0 103.5 711 Z" fill="#1f9d55"/>
<path d="M99 703.7 L107.6 703.7 A8.6 8.6 0 0 1 103.5 711 Z" fill="#fcc934"/>
<path d="M99 703.7 L91.6 708 A8.6 8.6 0 0 1 92 698 Z" fill="#1f9d55"/>
<circle cx="99" cy="703.7" r="4" fill="#fff"/><circle cx="99" cy="703.7" r="3" fill="#4a89dc"/>
<defs><linearGradient id="npg" x1="0" y1="0" x2="1" y2="1"><stop offset="0" stop-color="#8fd0e4"/><stop offset="1" stop-color="#3f9fbf"/></linearGradient></defs>
<path d="M136 697 L146.5 697.5 L147 709.5 L144 712 L141 711 Z" fill="#e8eef2" stroke="#a8b0b6" stroke-width="0.6"/>
<path d="M136 697 L146 698 L145.5 708 L141.5 711.5 L129 708 Z" fill="url(#npg)"/>
<path d="M137 696.3 L147 697.2" stroke="#8a9399" stroke-width="1.4"/>
<path d="M146 698 L147 709.5 L144.5 712" fill="none" stroke="#7c858c" stroke-width="1"/>
<ellipse cx="177.5" cy="702.5" rx="9" ry="5.5" transform="rotate(-18 177.5 702.5)" fill="none" stroke="#e06a6a" stroke-width="0.9"/>
<ellipse cx="176" cy="703.5" rx="5" ry="3" transform="rotate(-18 176 703.5)" fill="none" stroke="#eaa0a0" stroke-width="0.6"/>
<path d="M178 697 L181 705.5 M182.5 699 L179.5 705.5" stroke="#666" stroke-width="0.8"/>
<ellipse cx="180" cy="709.8" rx="1.8" ry="2.6" transform="rotate(-20 180 709.8)" fill="none" stroke="#2a86cc" stroke-width="1.3"/>
<ellipse cx="184.6" cy="707.5" rx="2.6" ry="1.8" transform="rotate(-20 184.6 707.5)" fill="none" stroke="#2a86cc" stroke-width="1.3"/>
<defs><linearGradient id="rcg" x1="0" x2="1"><stop offset="0" stop-color="#2a2f7a"/><stop offset="0.5" stop-color="#6a70c8"/><stop offset="1" stop-color="#2a2f7a"/></linearGradient></defs>
<rect x="208" y="695" width="18" height="18" fill="url(#rcg)"/><rect x="210.5" y="695.5" width="13" height="8" fill="#e9eff6"/><rect x="211" y="704.5" width="7" height="8.5" fill="#bcd0ea"/>
<circle cx="221.8" cy="708.3" r="6.3" fill="#111"/><circle cx="221.8" cy="708.3" r="4.6" fill="#e8101a"/><circle cx="220.6" cy="706.8" r="1.4" fill="#ff9090"/>
<ellipse cx="254.5" cy="705.5" rx="9" ry="6.8" transform="rotate(-25 254.5 705.5)" fill="#d3e3f0" stroke="#8fa8c0" stroke-width="0.8"/>
<circle cx="248.5" cy="706" r="1.7" fill="#e24a3a"/><circle cx="251.5" cy="701.5" r="1.7" fill="#5cb85c"/><circle cx="256" cy="700" r="1.7" fill="#f5c400"/><circle cx="252.5" cy="709.5" r="1.3" fill="#f4f8fb"/>
<path d="M264.5 697.5 L254.5 712.5" stroke="#d9962a" stroke-width="1.8"/><path d="M263.5 696.5 L266.5 694.5" stroke="#a08050" stroke-width="2.6"/>
</svg>
<svg style="left:0;top:0" width="1" height="1">
<path d="M1134.5 706 L1138.5 701.5 L1142.5 706" fill="none" stroke="#111" stroke-width="1.1"/>
<path d="M1154 709 A8.5 8.5 0 0 1 1162.5 700.5 M1156.3 709 A6.2 6.2 0 0 1 1162.5 702.8 M1158.6 709 A3.9 3.9 0 0 1 1162.5 705.1" fill="none" stroke="#222" stroke-width="0.9"/>
<circle cx="1162" cy="708.5" r="1.4" fill="#111"/>
<path d="M1170.5 702.5H1173L1176.5 699V711L1173 707.5H1170.5Z" fill="none" stroke="#222" stroke-width="0.9"/>
<path d="M1178.5 702.5 Q1180 705 1178.5 707.5 M1180.5 701 Q1183 705 1180.5 709" fill="none" stroke="#222" stroke-width="0.9"/>
<path d="M1247.5 698.5H1259.5V707.5H1255.5L1253.5 709.8L1251.5 707.5H1247.5Z" fill="none" stroke="#111" stroke-width="1"/>
</svg>
<div class="t" style="left:1194px;top:691px;font-size:9.6px;color:#111">9:40 AM</div>
<div class="t" style="left:1194px;top:706px;font-size:9.6px;color:#111">5/9/2020</div>
<div class="a" style="left:1276px;top:688px;width:1px;height:32px;background:#b9c4cf"></div>
<!--/BOTTOM-->
</body></html>
